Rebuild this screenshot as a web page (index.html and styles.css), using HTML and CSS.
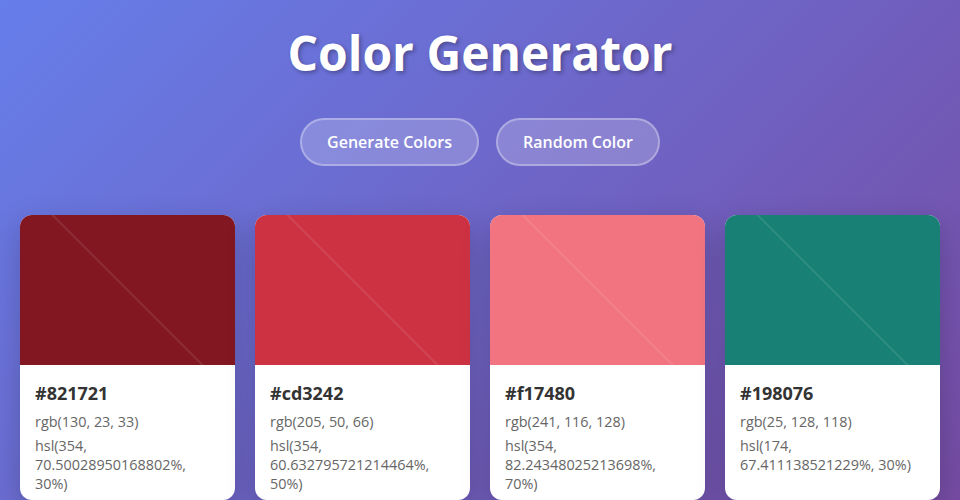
FILE: index.html
```html
<!DOCTYPE html>
<html lang="en">
<head>
	<meta charset="UTF-8">
	<title>Color Generator</title>
	<link rel="stylesheet" href="styles.css">
</head>
<body>
	<h1 class="title">Color Generator</h1>
	<div class="controls">
		<button class="btn">Generate Colors</button>
		<button class="btn">Random Color</button>
	</div>
	<div class="palette">
		<div class="card">
			<div class="swatch" style="background-color: #821721"></div>
			<div class="info">
				<h3 class="hex">#821721</h3>
				<p class="val">rgb(130, 23, 33)</p>
				<p class="val">hsl(354, 70.50028950168802%, 30%)</p>
			</div>
		</div>
		<div class="card">
			<div class="swatch" style="background-color: #cd3242"></div>
			<div class="info">
				<h3 class="hex">#cd3242</h3>
				<p class="val">rgb(205, 50, 66)</p>
				<p class="val">hsl(354, 60.632795721214464%, 50%)</p>
			</div>
		</div>
		<div class="card">
			<div class="swatch" style="background-color: #f17480"></div>
			<div class="info">
				<h3 class="hex">#f17480</h3>
				<p class="val">rgb(241, 116, 128)</p>
				<p class="val">hsl(354, 82.24348025213698%, 70%)</p>
			</div>
		</div>
		<div class="card">
			<div class="swatch" style="background-color: #198076"></div>
			<div class="info">
				<h3 class="hex">#198076</h3>
				<p class="val">rgb(25, 128, 118)</p>
				<p class="val">hsl(174, 67.411138521229%, 30%)</p>
			</div>
		</div>
	</div>
</body>
</html>
```

FILE: styles.css
```css
* {margin: 0;padding: 0;box-sizing: border-box;}
body {
	font-family: "Open Sans", "Liberation Sans", sans-serif;
	background: linear-gradient(135deg, #667eea 0%, #764ba2 100%);
	min-height: 100vh;
	padding: 20px;
	color: #333;
}
.title {
	text-align: center;
	color: #fff;
	font-size: 48px;
	font-weight: 700;
	text-shadow: 2px 2px 4px rgba(0,0,0,0.3);
	margin-bottom: 33px;
}
.controls {
	display: flex;
	justify-content: center;
	gap: 17px;
	margin-bottom: 49px;
}
.btn {
	font-family: inherit;
	font-size: 16px;
	font-weight: 600;
	line-height: 20px;
	color: #fff;
	background: rgba(255,255,255,0.2);
	border: 2px solid rgba(255,255,255,0.3);
	border-radius: 25px;
	padding: 12px 25px;
	cursor: pointer;
}
.palette {
	display: grid;
	grid-template-columns: repeat(4, 1fr);
	gap: 20px;
}
.card {
	background: #fff;
	border-radius: 12px;
	overflow: hidden;
	box-shadow: 0 10px 30px rgba(0,0,0,0.2);
}
.swatch {
	height: 150px;
	background-image: linear-gradient(45deg, transparent 49.4%, rgba(255,255,255,0.12) 50%, transparent 50.6%);
}
.info {padding: 16px 15px 7px;}
.hex {
	font-size: 18px;
	font-weight: 700;
	color: #333;
	margin-bottom: 7px;
}
.val {
	font-size: 14.4px;
	line-height: 19px;
	color: #666;
	margin-bottom: 5px;
}
.val:last-child {margin-bottom: 0;}
```
